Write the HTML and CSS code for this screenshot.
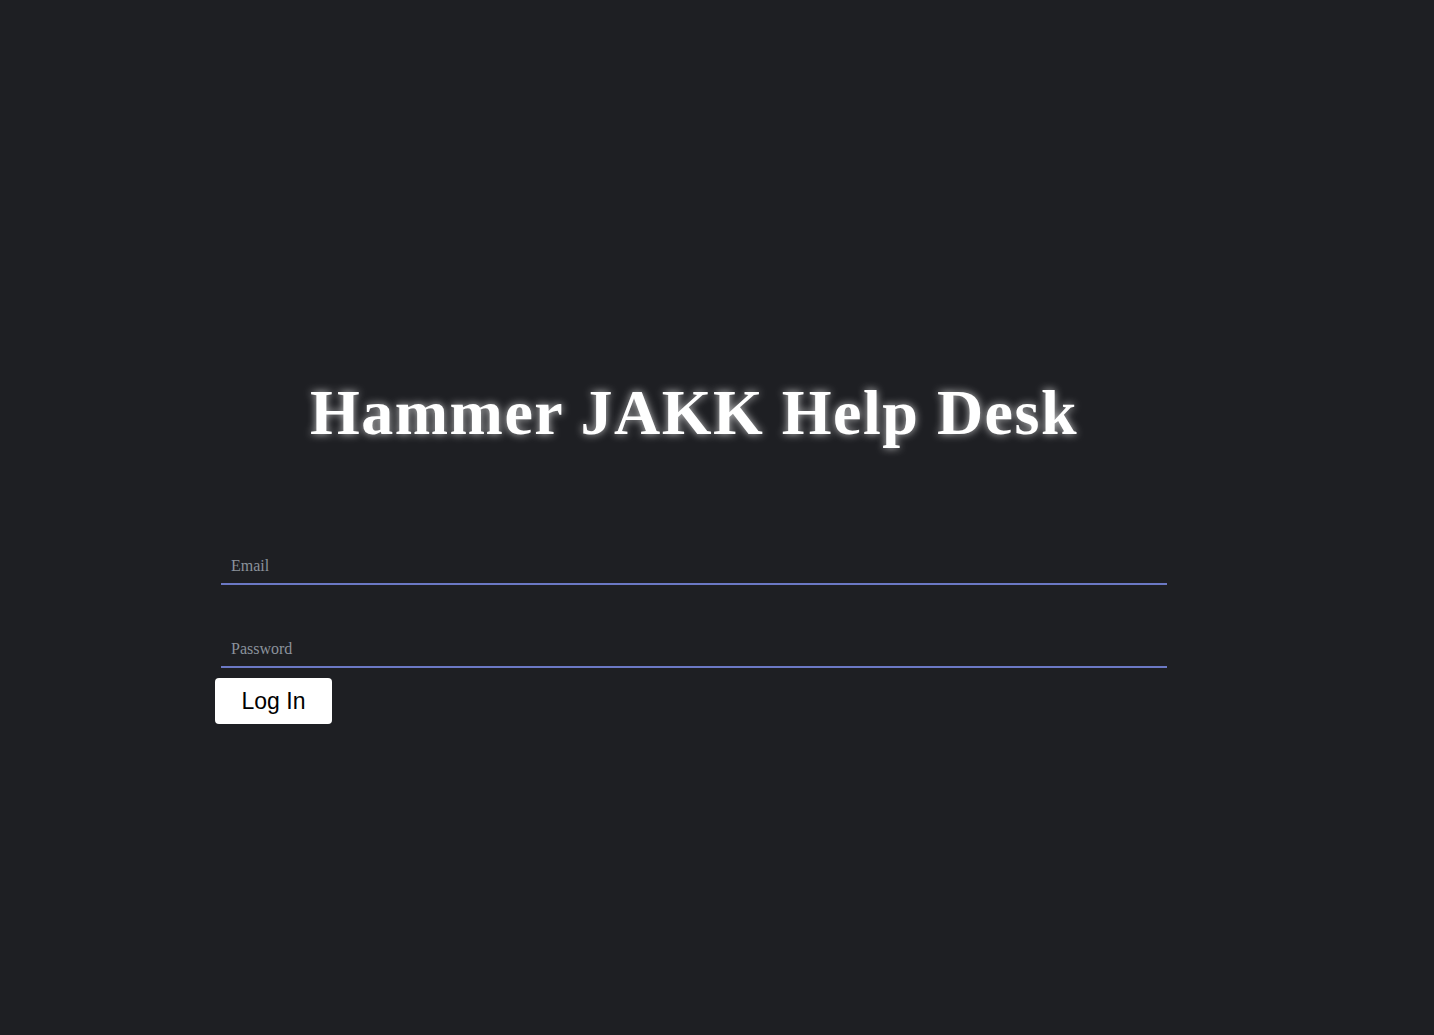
FILE: index.html
```html
<!DOCTYPE html>
<html lang="en">
<head>
  <meta charset="UTF-8">
  <meta name="viewport" content="width=device-width, initial-scale=1.0">
  <title>Hammer JAKK Help Desk</title>
  <link rel="stylesheet" href="styles.css">
</head>
<body>
  <div id="login-container">
    <h1 class="title">Hammer JAKK Help Desk</h1>
    <form id="login-form">
      <input class="field" type="email" placeholder="Email">
      <input class="field" type="password" placeholder="Password">
      <button type="button" class="login-button">Log In</button>
    </form>
  </div>
</body>
</html>
```

FILE: styles.css
```css
body {
  margin: 0;
  background-color: #1e1f23;
  font-family: 'Liberation Serif', 'Times New Roman', serif;
  height: 100vh;
}

#login-container {
  margin-left: 215px;
  width: 958px;
  padding-top: 368px;
}

.title {
  margin: 0;
  text-align: center;
  color: #fff;
  font-size: 64px;
  font-weight: bold;
  letter-spacing: 1.5px;
  line-height: 90px;
  text-shadow: 0 0 8px rgba(255, 255, 255, 0.75);
}

#login-form {
  display: flex;
  flex-direction: column;
  align-items: flex-start;
  margin-top: 91px;
}

.field {
  box-sizing: border-box;
  width: 946px;
  height: 36px;
  margin: 0 6px 47px;
  padding: 8px 10px 8px;
  background: transparent;
  border: none;
  border-bottom: 2px solid #6b78c4;
  color: #ddd;
  font-family: 'Liberation Serif', 'Times New Roman', serif;
  font-size: 16px;
  outline: none;
}

.field:last-of-type {
  margin-bottom: 10px;
}

.field::placeholder {
  color: #8b929b;
}

.login-button {
  width: 117px;
  height: 46px;
  background: #fff;
  color: #000;
  border: none;
  border-radius: 4px;
  font-family: 'Liberation Sans', Arial, sans-serif;
  font-size: 23px;
  cursor: pointer;
}
```
